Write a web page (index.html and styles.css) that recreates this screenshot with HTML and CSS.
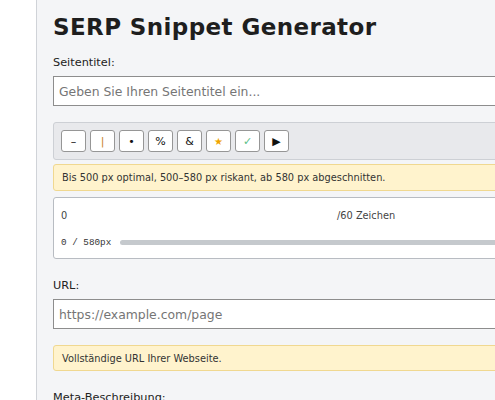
FILE: index.html
```html
<!DOCTYPE html>
<html lang="de">
<head>
<meta charset="utf-8">
<title>SERP Snippet Generator</title>
<link rel="stylesheet" href="styles.css">
</head>
<body>
<div class="page">
  <main class="panel">
    <h1 class="title">SERP Snippet Generator</h1>

    <label class="label label-first">Seitentitel:</label>
    <input class="field" type="text" placeholder="Geben Sie Ihren Seitentitel ein...">

    <div class="toolbar">
      <button class="tool">–</button>
      <button class="tool tool-pipe">|</button>
      <button class="tool">•</button>
      <button class="tool">%</button>
      <button class="tool">&amp;</button>
      <button class="tool tool-star">★</button>
      <button class="tool tool-check">✓</button>
      <button class="tool">▶</button>
    </div>
    <div class="note">Bis 500 px optimal, 500–580 px riskant, ab 580 px abgeschnitten.</div>

    <div class="counter">
      <div class="counter-row">
        <span class="count">0</span>
        <span class="limit">/60 Zeichen</span>
      </div>
      <div class="px-row">
        <span class="px">0 / 580px</span>
        <div class="bar"><div class="bar-fill" style="width:0%"></div></div>
      </div>
    </div>

    <label class="label label-url">URL:</label>
    <input class="field" type="text" placeholder="https://example.com/page">
    <div class="note note-url">Vollständige URL Ihrer Webseite.</div>

    <label class="label label-meta">Meta-Beschreibung:</label>
  </main>
</div>
</body>
</html>
```
FILE: styles.css
```css
html, body {
  margin: 0;
  padding: 0;
  overflow: hidden;
  background: #ffffff;
  font-family: "DejaVu Sans", Verdana, sans-serif;
  color: #222;
}
.page {
  width: 700px;
  padding-left: 36px;
}
.panel {
  background: #f4f5f7;
  border-left: 1px solid #d0d3d8;
  padding: 12px 16px 40px 16px;
  min-height: 420px;
  box-sizing: border-box;
  display: flex;
  flex-direction: column;
}
.title {
  margin: 0;
  font-size: 23px;
  font-weight: bold;
  line-height: 30px;
  color: #1e1e1e;
  letter-spacing: 0.4px;
}
.label {
  display: block;
  font-size: 11.3px;
  line-height: 14px;
  color: #222;
  margin-top: 16px;
  margin-bottom: 6px;
}
.label-first {
  margin-top: 14px;
}
.field {
  display: block;
  box-sizing: border-box;
  width: 100%;
  height: 30px;
  margin: 0;
  padding: 0 5px;
  border: 1px solid #8d8d8d;
  background: #fff;
  font-family: "DejaVu Sans", Verdana, sans-serif;
  font-size: 12.4px;
}
.field::placeholder {
  color: #757575;
}
.toolbar {
  margin-top: 16px;
  background: #e8e9ec;
  border: 1px solid #cdd0d5;
  border-radius: 3px;
  padding: 7px 7px;
  display: flex;
  gap: 4px;
}
.tool {
  width: 25px;
  height: 22px;
  padding: 0;
  margin: 0;
  background: #fff;
  border: 1px solid #969696;
  border-radius: 3px;
  font-family: "DejaVu Sans", Verdana, sans-serif;
  font-size: 11px;
  color: #111;
  display: flex;
  align-items: center;
  justify-content: center;
}
.tool-pipe { color: #c9822a; }
.tool-star { color: #f0a500; font-size: 10px; }
.tool-check { color: #5cc08a; }
.note {
  margin-top: 4px;
  background: #fff3cd;
  border: 1px solid #f0d890;
  border-radius: 3px;
  padding: 0 8px;
  height: 27px;
  box-sizing: border-box;
  display: flex;
  align-items: center;
  font-size: 9.8px;
  color: #333;
}
.counter {
  margin-top: 6px;
  background: #fff;
  border: 1px solid #b8bcc2;
  border-radius: 3px;
  height: 62px;
  box-sizing: border-box;
  padding: 12px 7px 0 7px;
  display: flex;
  flex-direction: column;
  gap: 15px;
}
.counter-row {
  display: grid;
  grid-template-columns: 276px auto;
  font-size: 9.8px;
  line-height: 12px;
  color: #444;
}
.px-row {
  display: flex;
  align-items: center;
  gap: 9px;
}
.px {
  font-family: "Liberation Mono", "DejaVu Sans Mono", monospace;
  font-size: 9.3px;
  color: #333;
  white-space: pre;
}
.bar {
  flex: 1;
  height: 5px;
  background: #c5c9cd;
  border-radius: 3px;
  overflow: hidden;
}
.bar-fill {
  height: 100%;
  background: #4caf50;
}
.label-url {
  margin-top: 20px;
}
.note-url {
  margin-top: 16px;
  height: 26px;
}
.label-meta {
  margin-top: 20px;
}
```
